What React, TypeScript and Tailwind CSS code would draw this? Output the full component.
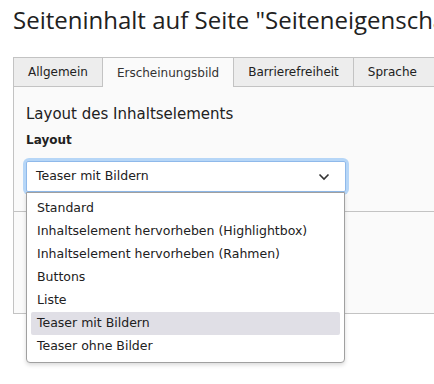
const tabs = ["Allgemein", "Erscheinungsbild", "Barrierefreiheit", "Sprache"];
const options = [
  "Standard",
  "Inhaltselement hervorheben (Highlightbox)",
  "Inhaltselement hervorheben (Rahmen)",
  "Buttons",
  "Liste",
  "Teaser mit Bildern",
  "Teaser ohne Bilder",
];

export default function App() {
  return (
    <div className="h-[384px] w-[434px] overflow-hidden bg-white text-[#212121] [font-family:'DejaVu_Sans',Verdana,sans-serif]">
      <div className="overflow-hidden">
        <h1 className="whitespace-nowrap pl-[13px] pt-[4px] text-[24px] leading-[32px] [font-family:'Open_Sans',sans-serif]">
          Seiteninhalt auf Seite "Seiteneigenschaften"
        </h1>
      </div>
      <div className="ml-[13px] mt-[21px] w-[560px]">
        <div className="flex h-[30px] border-b border-[#c3c3c3] text-[12px]">
          {tabs.map((tab, i) => (
            <div
              key={tab}
              className={`flex items-center border-t border-r border-[#c3c3c3] px-[14px] ${
                i === 0 ? "border-l" : ""
              } ${i === 3 ? "pr-[40px]" : ""} ${
                i === 1 ? "-mb-px bg-[#fafafa] text-[#333]" : "bg-[#ededed] text-[#212121]"
              }`}
            >
              {tab}
            </div>
          ))}
        </div>
        <div className="relative h-[227px] border-b border-l border-[#c3c3c3] bg-[#fafafa]">
          <div className="px-[12px] pt-[17px]">
            <h2 className="text-[15px] leading-[20px] text-[#212121]">Layout des Inhaltselements</h2>
            <div className="mt-[8px] text-[12px] font-bold leading-[16px]">Layout</div>
            <div className="relative mt-[13px] w-[320px]">
              <div className="rounded-[3px] shadow-[0_0_0_3px_#b6d6f7]">
                <div className="flex h-[31px] items-center justify-between rounded-[2px] border border-[#8fb9ea] bg-white pl-[9px] pr-[15px] text-[12.5px]">
                  <span>Teaser mit Bildern</span>
                  <svg width="12" height="8" viewBox="0 0 12 8" fill="none" stroke="#333" strokeWidth="1.6">
                    <path d="M1.5 1.5 6 6l4.5-4.5" />
                  </svg>
                </div>
              </div>
              <div className="absolute left-0 top-[31px] z-10 w-[319px] rounded-b-[4px] border border-[#a0a0a0] bg-white px-[4px] pb-[4px] pt-[4px] text-[12.5px] shadow-[0_2px_4px_rgba(0,0,0,0.15)]">
                {options.map((o) => (
                  <div
                    key={o}
                    className={`flex h-[23px] items-center rounded-[2px] pl-[6px] ${
                      o === "Teaser mit Bildern" ? "bg-[#e0dfe6]" : ""
                    }`}
                  >
                    {o}
                  </div>
                ))}
              </div>
            </div>
          </div>
          <div className="mt-[19px] border-t border-[#c3c3c3]" />
        </div>
      </div>
    </div>
  );
}
